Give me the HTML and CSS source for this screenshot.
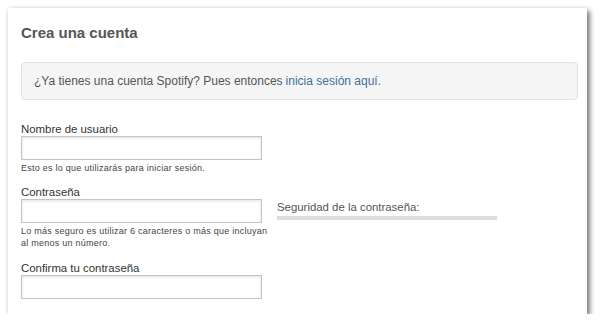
FILE: index.html
```html
<!DOCTYPE html>
<html lang="es">
<head>
<meta charset="utf-8">
<title>Crea una cuenta</title>
<link rel="stylesheet" href="styles.css">
</head>
<body>
<div class="card">
  <h1 class="title">Crea una cuenta</h1>
  <div class="notice">¿Ya tienes una cuenta Spotify? Pues entonces <a href="#" class="link">inicia sesión aquí.</a></div>

  <div class="field first">
    <label class="label">Nombre de usuario</label>
    <div class="input"></div>
    <p class="hint">Esto es lo que utilizarás para iniciar sesión.</p>
  </div>

  <div class="field">
    <label class="label">Contraseña</label>
    <div class="row">
      <div class="col">
        <div class="input"></div>
        <p class="hint">Lo más seguro es utilizar 6 caracteres o más que incluyan al menos un número.</p>
      </div>
      <div class="strength">
        <span class="strength-label">Seguridad de la contraseña:</span>
        <div class="strength-bar"></div>
      </div>
    </div>
  </div>

  <div class="field last">
    <label class="label">Confirma tu contraseña</label>
    <div class="input"></div>
  </div>
</div>
</body>
</html>
```

FILE: styles.css
```css
html, body {
  margin: 0;
  padding: 0;
  background: #ffffff;
}
body {
  font-family: "Liberation Sans", Arial, sans-serif;
  color: #333;
}
.card {
  margin: 8px 0 0 8px;
  width: 579px;
  height: 306px;
  box-sizing: border-box;
  background: #fff;
  padding: 15px 9px 0 13px;
  box-shadow: 3px 3px 5px rgba(0,0,0,0.5), 0 0 4px rgba(0,0,0,0.12);
}
.title {
  margin: 0;
  font-size: 15px;
  line-height: 20px;
  font-weight: bold;
  color: #555;
}
.notice {
  margin-top: 19px;
  height: 38px;
  box-sizing: border-box;
  background: #f5f5f5;
  border: 1px solid #e2e2e2;
  border-radius: 4px;
  padding: 0 12px;
  display: flex;
  align-items: center;
  font-size: 12px;
  color: #555;
}
.link {
  color: #3d7199;
  text-decoration: none;
  margin-left: 3px;
}
.field {
  display: flex;
  flex-direction: column;
  margin-top: 12px;
}
.field.first { margin-top: 23px; }
.field.last { margin-top: 13px; }
.label {
  font-size: 11.4px;
  line-height: 13px;
  color: #333;
}
.input {
  width: 241px;
  height: 24px;
  box-sizing: border-box;
  border: 1px solid #c4c4c4;
  background: #fff;
  box-shadow: inset 0 1px 3px rgba(0,0,0,0.12);
}
.hint {
  margin: 2px 0 0;
  font-size: 9px;
  line-height: 12px;
  letter-spacing: 0.25px;
  color: #444;
  width: 255px;
}
.row {
  display: grid;
  grid-template-columns: 241px auto;
  column-gap: 15px;
}
.col {
  display: flex;
  flex-direction: column;
}
.strength {
  padding-top: 1px;
  display: flex;
  flex-direction: column;
}
.strength-label {
  font-size: 11.4px;
  line-height: 14px;
  color: #555;
}
.strength-bar {
  margin-top: 2px;
  width: 220px;
  height: 4px;
  background: #dddddd;
}
```
